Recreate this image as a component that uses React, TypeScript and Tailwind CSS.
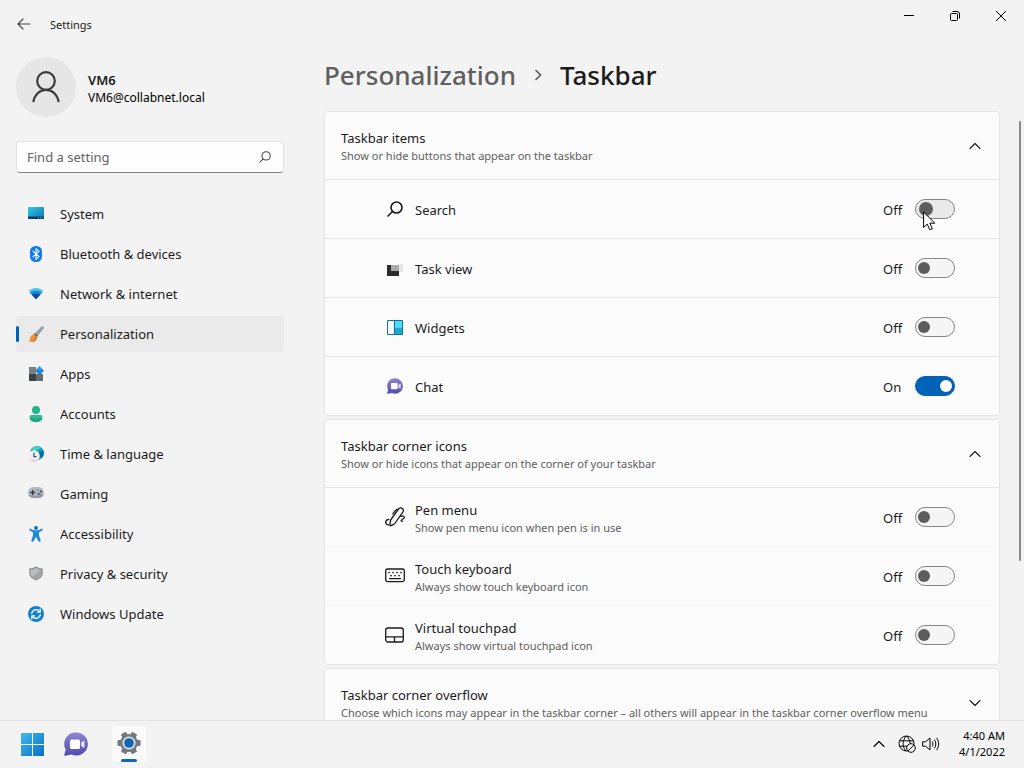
import React, { useState } from 'react'

const SystemIcon = () => (
  <svg width="16" height="16" viewBox="0 0 16 16">
    <defs>
      <linearGradient id="sys" x1="0" y1="0" x2="1" y2="1">
        <stop offset="0" stopColor="#35c8ea" />
        <stop offset="1" stopColor="#0b74b3" />
      </linearGradient>
    </defs>
    <rect x="0" y="1" width="16" height="12" rx="1" fill="url(#sys)" />
    <path d="M0 10.500h16V12a1 1 0 0 1-1 1H1a1 1 0 0 1-1-1z" fill="#0a3f63" />
    <path d="M10 11.800h1M12 11.800h1M14 11.800h.8" stroke="#7fd4f0" strokeWidth="0.8" />
  </svg>
)

const BluetoothIcon = () => (
  <svg width="16" height="16" viewBox="0 0 16 16">
    <rect x="2" y="0" width="12" height="16" rx="5.5" fill="#0f7bec" />
    <path d="M5 5.2l6 5.4-3 2.7V2.7l3 2.7-6 5.4" fill="none" stroke="#fff" strokeWidth="1.1" strokeLinejoin="round" strokeLinecap="round" />
  </svg>
)

const NetworkIcon = () => (
  <svg width="16" height="16" viewBox="0 0 16 16">
    <path d="M.6 5.100C2.400 3.200 5 2.100 8 2.100s5.600 1.100 7.400 3L8 13.300z" fill="#4fc9ee" />
    <path d="M2 6.700C3.500 5.300 5.600 4.500 8 4.500s4.500.8 6 2.200L8 13.300z" fill="#1c8ad8" />
    <path d="M3.800 8.700c1.200-1 2.600-1.500 4.200-1.500s3 .5 4.200 1.500L8 13.300z" fill="#0d4da8" />
  </svg>
)

const BrushIcon = () => (
  <svg width="16" height="16" viewBox="0 0 16 16">
    <path d="M15.400.5c.7.6.6 1.400.2 2L9 10.800 5.800 8.200 13.400.8c.6-.6 1.400-.8 2-.3z" fill="#97a0a8" />
    <path d="M6.900 7.200L9.900 9.700 8.800 11 5.600 8.400z" fill="#6e5a50" />
    <path d="M5.600 8.200l3.200 2.700c.4 2.300-1.400 4.600-4.200 4.900-1.700.2-3.300-.1-4.200-.8 1.400-.5 1.500-1.500 1.800-3.100.4-2.100 1.700-3.400 3.400-3.700z" fill="#f0953a" />
    <path d="M4.800 15.700c2.500-.3 4.200-2.400 4.100-4.500l-1.500-1.300c.1 2.600-1.300 4.500-4.500 5.800.6.100 1.200.1 1.900 0z" fill="#d9702a" />
  </svg>
)

const AppsIcon = () => (
  <svg width="16" height="16" viewBox="0 0 16 16">
    <rect x="1" y="1" width="7" height="7" fill="#7c7f82" />
    <rect x="1" y="8" width="7" height="7" fill="#3f4244" />
    <rect x="8" y="8" width="7" height="7" fill="#686b6e" />
    <path d="M11.500 0L16 4.500 11.500 9 7 4.500z" fill="#2f9be8" />
    <path d="M11.500 9L16 4.500h-9z" fill="#1b82d6" />
  </svg>
)

const AccountsIcon = () => (
  <svg width="16" height="16" viewBox="0 0 16 16">
    <circle cx="8" cy="4" r="4" fill="#25b58d" />
    <path d="M3.500 9h9a2 2 0 0 1 2 2c0 3-2.600 5-6.500 5s-6.500-2-6.500-5a2 2 0 0 1 2-2z" fill="#2bbd94" />
    <path d="M1.700 12.300c.7 2.300 3 3.700 6.300 3.700s5.600-1.400 6.300-3.700z" fill="#1fa683" />
  </svg>
)

const TimeIcon = () => (
  <svg width="16" height="16" viewBox="0 0 16 16">
    <circle cx="9" cy="7" r="7" fill="#1b9fc4" />
    <path d="M4 2.200C5.800.4 9.500-.5 12 .8c.5 1.800-1 2.600-2.400 2.900C8.200 4 7.500 5.800 5.500 5.500z" fill="#46d3b8" />
    <path d="M11 6l4.500-1.500c.9 2.800 0 6-2.500 7.800L11.500 10z" fill="#0a6f9f" />
    <circle cx="6" cy="10" r="5.700" fill="#eef0f4" />
    <path d="M1 12.700a5.700 5.700 0 0 0 9.500.8C8 14 4 14 1 12.700z" fill="#f2c9cb" />
    <path d="M6 6.800v3.900h2.500" fill="none" stroke="#3b4a58" strokeWidth="1.200" />
  </svg>
)

const GamingIcon = () => (
  <svg width="16" height="16" viewBox="0 0 16 16">
    <rect x="0" y="1" width="16" height="11" rx="5.500" fill="#b4bac0" />
    <path d="M.3 8.200A5.500 5.500 0 0 0 5.500 12h5a5.500 5.500 0 0 0 5.200-3.800C13 10 3 10 .3 8.200z" fill="#949ba2" />
    <path d="M4.700 4v5M2.200 6.500h5" stroke="#33393f" strokeWidth="1.300" />
    <circle cx="10.700" cy="8" r="1" fill="#33393f" />
    <circle cx="12.700" cy="5.500" r="1" fill="#33393f" />
    <circle cx="9.500" cy="4" r=".7" fill="#5b646c" />
    <circle cx="13" cy="8.500" r=".7" fill="#2c7cc4" />
  </svg>
)

const AccessibilityIcon = () => (
  <svg width="16" height="16" viewBox="0 0 16 16">
    <circle cx="8" cy="2" r="1.900" fill="#0f6cbd" />
    <path d="M2.700 2.700c1.600 1.200 3.300 1.700 5.300 1.700s3.700-.5 5.300-1.700c1-.6 1.900 1.100.9 1.800-1.100.8-2.200 1.400-3.200 1.700v3l1.600 5.100c.4 1.500-1.800 2.200-2.400.8L8.500 11.500h-1l-1.700 3.600c-.6 1.400-2.800.7-2.400-.8L5 9.200v-3c-1-.3-2.100-.9-3.200-1.700-1-.7-.1-2.400.9-1.800z" fill="#1f87dc" />
  </svg>
)

const ShieldIcon = () => (
  <svg width="16" height="16" viewBox="0 0 16 16">
    <path d="M8 .3c2.100 1.500 4.300 2.200 6.800 2.300v4.500c0 3.500-2.600 5.700-6.800 7.400C3.800 12.800 1.200 10.600 1.200 7.100V2.600C3.700 2.500 5.900 1.800 8 .3z" fill="#8d9093" />
    <path d="M8 1.700c1.800 1.200 3.600 1.800 5.700 2v3.400c0 2.800-2.100 4.700-5.700 6.200-3.600-1.500-5.700-3.400-5.700-6.200V3.700c2.100-.2 3.900-.8 5.700-2z" fill="#b9bbbe" />
    <path d="M13.700 3.700v3.400c0 2.800-2.100 4.700-5.700 6.200-1.700-.7-3-1.400-4-2.300z" fill="#a1a4a7" />
  </svg>
)

const UpdateIcon = () => (
  <svg width="16" height="16" viewBox="0 0 16 16">
    <circle cx="8" cy="8" r="8" fill="#1380d2" />
    <path d="M3.700 7.300a4.400 4.400 0 0 1 7.800-1.900M12.300 8.700a4.400 4.400 0 0 1-7.800 1.900" fill="none" stroke="#fff" strokeWidth="1.300" strokeLinecap="round" />
    <path d="M12.200 3.200v2.900H9.300M3.800 12.800V9.900h2.900" fill="none" stroke="#fff" strokeWidth="1.300" strokeLinecap="round" strokeLinejoin="round" />
  </svg>
)

const Magnifier = ({ size, stroke }: { size: number; stroke: number }) => (
  <svg width={size} height={size} viewBox="0 0 16 16" fill="none" stroke="currentColor" strokeWidth={stroke} strokeLinecap="round">
    <circle cx="9.500" cy="6.500" r="5.500" />
    <path d="M5.500 10.500L1 15" />
  </svg>
)

const TaskViewIcon = () => (
  <svg width="16" height="16" viewBox="0 0 16 16">
    <rect x="12" y="4" width="4" height="8" fill="#e8e8e8" />
    <rect x="0" y="5" width="12" height="11" fill="#2b2b2b" />
    <rect x="4" y="5" width="8" height="6" fill="#a9a9a9" />
  </svg>
)

const WidgetsIcon = () => (
  <svg width="16" height="16" viewBox="0 0 16 16">
    <rect x=".5" y="1.500" width="15" height="14" fill="#f4fbff" />
    <rect x="7.500" y="1.500" width="8" height="7" fill="#4fdcf5" />
    <rect x="7.500" y="8.500" width="8" height="7" fill="#1ea7d2" />
    <path d="M7.500 1.500v14M.5 1.500h15v14H.5z" fill="none" stroke="#15709f" />
  </svg>
)

const ChatIcon = ({ size }: { size: number }) => (
  <svg width={size} height={size} viewBox="0 0 24 24">
    <defs>
      <linearGradient id="chat" x1="0" y1="0" x2="0" y2="1">
        <stop offset="0" stopColor="#8f86cf" />
        <stop offset="1" stopColor="#5148b0" />
      </linearGradient>
    </defs>
    <path d="M12.500 0.500a11.500 11.500 0 1 1-4.800 22L1 23.800c-.5.100-.9-.3-.8-.8l1.500-5.500A11.500 11.500 0 0 1 12.500.5z" fill="url(#chat)" />
    <rect x="6" y="7.500" width="10" height="9.500" rx="1.500" fill="#fff" />
    <path d="M17 10.800l2.500-2c.4-.3 1 0 1 .5v6c0 .5-.6.800-1 .5l-2.500-2z" fill="#e4e2f7" />
  </svg>
)

const PenIcon = () => (
  <svg width="20" height="20" viewBox="0 0 20 20" fill="none" stroke="currentColor" strokeWidth="1.300" strokeLinecap="round" strokeLinejoin="round">
    <path d="M6 12.500L13.500 2c.9-1.200 2.600-1.500 3.800-.6 1.200.8 1.400 2.500.5 3.700L10.200 16c-.4.600-.9 1-1.500 1.300l-2.900 1.400c-.5.200-.9-.1-.8-.6l.2-3.300c.1-.8.3-1.600.8-2.300z" />
    <path d="M13 2.600C11.500 2 10.200 3.500 9.300 4.800L7.800 7M3.800 12.300C1.800 12.500.7 13.800.7 15.300c0 1.700 1.300 2.500 3 2.600M15.500 9.300c2-.8 3.600-.3 3.800 1 .2 1.700-2.900 1.600-3.100 3.100-.1.800.6 1 1.400.8" />
  </svg>
)

const KeyboardIcon = () => (
  <svg width="20" height="20" viewBox="0 0 20 20" fill="none" stroke="currentColor" strokeWidth="1.300" strokeLinecap="round">
    <rect x=".7" y="3" width="18.600" height="12.600" rx="1.800" />
    <path d="M4.500 12.600h11" />
    <path d="M4 6.500h.01M8 6.500h.01M12 6.500h.01M16 6.500h.01M6 9.600h.01M10 9.600h.01M14 9.600h.01" strokeWidth="1.700" />
  </svg>
)

const TouchpadIcon = () => (
  <svg width="20" height="20" viewBox="0 0 20 20" fill="none" stroke="currentColor" strokeWidth="1.300">
    <rect x=".7" y="3" width="17.600" height="14" rx="2.200" />
    <path d="M.7 11.800h17.600M9.500 11.800V17" />
  </svg>
)

const Chevron = ({ up }: { up?: boolean }) => (
  <svg width="12" height="12" viewBox="0 0 12 12" fill="none" stroke="currentColor" strokeWidth="1.100" strokeLinecap="round" strokeLinejoin="round">
    <path d={up ? 'M1 8.500l5-5 5 5' : 'M1 3.500l5 5 5-5'} />
  </svg>
)

const StartIcon = () => (
  <svg width="24" height="24" viewBox="0 0 24 24">
    <defs>
      <linearGradient id="win" x1="0" y1="0" x2="24" y2="24" gradientUnits="userSpaceOnUse">
        <stop offset="0" stopColor="#45bdf0" />
        <stop offset="1" stopColor="#0a6fc4" />
      </linearGradient>
    </defs>
    <path d="M1 1h11v11H1zM13 1h11v11H13zM1 13h11v11H1zM13 13h11v11H13z" fill="url(#win)" />
  </svg>
)

const GearIcon = () => (
  <svg width="24" height="24" viewBox="0 0 24 24">
    <g fill="#75797d">
      <circle cx="12" cy="12" r="9" />
      <rect x="9" y="0.500" width="6" height="23" rx="1.200" transform="rotate(30 12 12)" />
      <rect x="9" y="0.500" width="6" height="23" rx="1.200" transform="rotate(90 12 12)" />
      <rect x="9" y="0.500" width="6" height="23" rx="1.200" transform="rotate(150 12 12)" />
    </g>
    <circle cx="12" cy="12" r="6.500" fill="#dce6f0" />
    <circle cx="12" cy="12" r="4.800" fill="#1464b4" />
  </svg>
)

const GlobeOffIcon = () => (
  <svg width="18" height="18" viewBox="0 0 18 18" fill="none" stroke="currentColor" strokeWidth="1">
    <circle cx="8.500" cy="8.500" r="7.500" />
    <path d="M1.500 5.800h14M1.500 11.200H9M8 16c-4-4-4-11 .5-15 2.400 2.200 3.500 4.700 3.600 7.500" />
    <circle cx="13" cy="13" r="4.300" fill="#f3f3f3" />
    <path d="M10 16l6-6" />
  </svg>
)

const SpeakerIcon = () => (
  <svg width="18" height="18" viewBox="0 0 18 18" fill="none" stroke="currentColor" strokeWidth="1" strokeLinecap="round" strokeLinejoin="round">
    <path d="M1 6.800h2.500L8 3v12l-4.500-3.800H1z" />
    <path d="M10.300 6.700c.9 1.400.9 3.200 0 4.600M12.600 5c1.700 2.400 1.700 5.600 0 8M14.800 3.200c2.600 3.500 2.600 8.100 0 11.600" />
  </svg>
)

const Cursor = () => (
  <svg width="13" height="20" viewBox="0 0 13 20">
    <path d="M.6 1v15.500l3.600-3.400 2.500 5.600 2.600-1.100-2.500-5.400h5z" fill="#fff" stroke="#000" strokeWidth="1" strokeLinejoin="round" />
  </svg>
)

const navItems = [
  { label: 'System', icon: <SystemIcon /> },
  { label: 'Bluetooth & devices', icon: <BluetoothIcon /> },
  { label: 'Network & internet', icon: <NetworkIcon /> },
  { label: 'Personalization', icon: <BrushIcon />, active: true },
  { label: 'Apps', icon: <AppsIcon /> },
  { label: 'Accounts', icon: <AccountsIcon /> },
  { label: 'Time & language', icon: <TimeIcon /> },
  { label: 'Gaming', icon: <GamingIcon /> },
  { label: 'Accessibility', icon: <AccessibilityIcon /> },
  { label: 'Privacy & security', icon: <ShieldIcon /> },
  { label: 'Windows Update', icon: <UpdateIcon /> },
]

interface RowProps {
  id: string
  icon: React.ReactNode
  label: string
  hint?: string
  initial?: boolean
  hovered?: boolean
}

const ToggleRow: React.FC<RowProps> = ({ id, icon, label, hint, initial = false, hovered }) => {
  const [on, setOn] = useState(initial)
  return (
    <li className="flex h-[59px] items-center pl-[60px] pr-11 last:h-[58px]">
      <span className="flex w-5 shrink-0 justify-center">{icon}</span>
      <label htmlFor={id} className="ml-[10px] flex-1 pt-[2px]">
        <span className="block text-[13px] leading-5">{label}</span>
        {hint && <span className="block text-[11px] leading-4 text-[#606060]">{hint}</span>}
      </label>
      <span className="w-8 pt-[2px] text-[13px] leading-5">{on ? 'On' : 'Off'}</span>
      <span className="relative flex">
        <input
          id={id}
          type="checkbox"
          role="switch"
          checked={on}
          onChange={() => setOn(!on)}
          className={`flex h-5 w-10 appearance-none items-center rounded-full border border-[#868686] before:rounded-full before:bg-[#5d5d5d] checked:justify-end checked:border-[#0063b8] checked:bg-[#0063b8] checked:before:bg-white ${
            hovered ? 'bg-[#e9e9e9] px-[3px] before:size-[14px]' : 'bg-[#f5f5f5] px-[2px] before:size-3'
          }`}
        />
        {hovered && (
          <span className="pointer-events-none absolute left-2 top-3">
            <Cursor />
          </span>
        )}
      </span>
    </li>
  )
}

interface CardProps {
  title: string
  hint: string
  open?: boolean
  children?: React.ReactNode
}

const Card: React.FC<CardProps> = ({ title, hint, open, children }) => (
  <section className="rounded-[4px] border border-[#e5e5e5] bg-[#fbfbfb]">
    <button type="button" aria-expanded={!!open} className="flex h-[67px] w-full items-center pl-4 pr-[18px] text-left">
      <span className="min-w-0 flex-1 whitespace-nowrap">
        <span className="block text-[13px] leading-5">{title}</span>
        <span className="block text-[11px] leading-4 text-[#606060]">{hint}</span>
      </span>
      <Chevron up={open} />
    </button>
    {children}
  </section>
)

const App: React.FC = () => (
  <div className="flex h-screen flex-col overflow-hidden bg-[#f3f3f3] font-['Noto_Sans','Open_Sans',sans-serif] text-[#1b1b1b]">
    <header className="flex h-12 shrink-0 items-center pl-4">
      <button type="button" aria-label="Back" className="flex size-4 items-center justify-center">
        <svg width="14" height="12" viewBox="0 0 14 12" fill="none" stroke="#444" strokeWidth="1.100" strokeLinecap="round" strokeLinejoin="round">
          <path d="M13 6H1M6 1L1 6l5 5" />
        </svg>
      </button>
      <span className="ml-[18px] flex-1 pt-[2px] text-[11px] leading-4">Settings</span>
      <div className="flex self-start">
        <button type="button" aria-label="Minimize" className="flex h-8 w-[46px] items-center justify-center">
          <svg width="10" height="10" viewBox="0 0 10 10" stroke="#000"><path d="M0 4.500h10" /></svg>
        </button>
        <button type="button" aria-label="Restore" className="flex h-8 w-[46px] items-center justify-center">
          <svg width="10" height="10" viewBox="0 0 10 10" fill="none" stroke="#000">
            <rect x=".5" y="2.500" width="7" height="7" rx="1" />
            <path d="M2.500.5H7A2.500 2.500 0 0 1 9.500 3v4.500" />
          </svg>
        </button>
        <button type="button" aria-label="Close" className="flex h-8 w-[46px] items-center justify-center">
          <svg width="10" height="10" viewBox="0 0 10 10" stroke="#000"><path d="M0 0l10 10M10 0L0 10" /></svg>
        </button>
      </div>
    </header>

    <div className="flex min-h-0 flex-1">
      <aside className="flex w-[300px] shrink-0 flex-col px-4 pt-[9px]">
        <div className="flex items-center gap-3">
          <div className="flex size-[60px] items-center justify-center rounded-full bg-[#e6e6e6]">
            <svg width="28" height="32" viewBox="0 0 28 32" fill="none" stroke="#3c3c3c" strokeWidth="2.200">
              <circle cx="14" cy="10" r="8.800" />
              <path d="M1.300 31C2.500 23.800 7.500 18.800 14 18.800S25.500 23.800 26.700 31" />
            </svg>
          </div>
          <div className="pt-[2px]">
            <div className="text-[13px] font-semibold leading-5">VM6</div>
            <div className="text-[12px] leading-4 text-black">VM6@collabnet.local</div>
          </div>
        </div>

        <div className="mt-6 flex h-8 items-center rounded-[4px] border border-b-[#868686] border-[#e3e3e3] bg-[#fdfdfd] pl-[10px] pr-3">
          <input
            type="text"
            aria-label="Find a setting"
            placeholder="Find a setting"
            className="min-w-0 flex-1 bg-transparent text-[13px] leading-5 outline-none placeholder:text-[#636363]"
          />
          <button type="button" aria-label="Search" className="text-[#444]"><Magnifier size={12} stroke={1.4} /></button>
        </div>

        <nav className="mt-[23px] flex flex-col gap-1">
          {navItems.map((item) => (
            <a
              key={item.label}
              href="#"
              className={`flex h-9 items-center rounded-[4px] ${item.active ? 'bg-[#eaeaea]' : ''}`}
            >
              <span className={`h-4 w-[3px] rounded-full ${item.active ? 'bg-[#0063b8]' : ''}`} />
              <span className="ml-[9px]">{item.icon}</span>
              <span className="ml-4 text-[13px] leading-5">{item.label}</span>
            </a>
          ))}
        </nav>
      </aside>

      <main className="flex min-w-0 flex-1 flex-col pl-6">
        <nav className="flex h-[63px] shrink-0 items-center pb-[10px] text-[26px] font-medium leading-9">
          <a href="#" className="text-[#5f5f5f]">Personalization</a>
          <span className="mx-4 text-[#5f5f5f]">
            <svg width="12" height="12" viewBox="0 0 12 12" fill="none" stroke="currentColor" strokeWidth="1.700">
              <path d="M3.500 1L8.500 6l-5 5" />
            </svg>
          </span>
          <h1>Taskbar</h1>
        </nav>

        <div className="flex min-h-0 flex-1 overflow-hidden">
          <div className="flex min-w-0 flex-1 flex-col gap-[3px]">
            <Card title="Taskbar items" hint="Show or hide buttons that appear on the taskbar" open>
              <ul className="divide-y divide-[#e5e5e5] border-t border-[#e5e5e5]">
                <ToggleRow id="search" label="Search" icon={<Magnifier size={16} stroke={1.6} />} hovered />
                <ToggleRow id="task-view" label="Task view" icon={<TaskViewIcon />} />
                <ToggleRow id="widgets" label="Widgets" icon={<WidgetsIcon />} />
                <ToggleRow id="chat" label="Chat" icon={<ChatIcon size={16} />} initial />
              </ul>
            </Card>
            <Card title="Taskbar corner icons" hint="Show or hide icons that appear on the corner of your taskbar" open>
              <ul className="divide-y divide-[#f7f7f7] border-t border-[#e5e5e5]">
                <ToggleRow id="pen" label="Pen menu" hint="Show pen menu icon when pen is in use" icon={<PenIcon />} />
                <ToggleRow id="keyboard" label="Touch keyboard" hint="Always show touch keyboard icon" icon={<KeyboardIcon />} />
                <ToggleRow id="touchpad" label="Virtual touchpad" hint="Always show virtual touchpad icon" icon={<TouchpadIcon />} />
              </ul>
            </Card>
            <Card
              title="Taskbar corner overflow"
              hint="Choose which icons may appear in the taskbar corner – all others will appear in the taskbar corner overflow menu"
            />
          </div>
          <div className="flex w-6 shrink-0 justify-end pr-[3px] pt-[10px]">
            <div className="h-[440px] w-[2px] rounded-full bg-[#8a8a8a]" />
          </div>
        </div>
      </main>
    </div>

    <footer className="flex h-12 shrink-0 items-center border-t border-[#e2e2e2] bg-[#f3f3f3] pb-[2px] pl-5 pr-[19px]">
      <button type="button" aria-label="Start"><StartIcon /></button>
      <button type="button" aria-label="Chat" className="ml-5"><ChatIcon size={24} /></button>
      <button type="button" aria-label="Settings" className="ml-6 flex h-9 w-[34px] flex-col items-center justify-end rounded-[4px] bg-[#fafafa]">
        <GearIcon />
        <span className="mt-1 h-[3px] w-4 rounded-full bg-[#1067b8]" />
      </button>
      <div className="ml-auto flex items-center text-black">
        <button type="button" aria-label="Show hidden icons"><Chevron up /></button>
        <button type="button" aria-label="Network" className="ml-[13px]"><GlobeOffIcon /></button>
        <button type="button" aria-label="Volume" className="ml-[6px]"><SpeakerIcon /></button>
        <time className="ml-[19px] text-right text-[11px] leading-4">
          <span className="block">4:40 AM</span>
          <span className="block">4/1/2022</span>
        </time>
      </div>
    </footer>
  </div>
)

export default App
